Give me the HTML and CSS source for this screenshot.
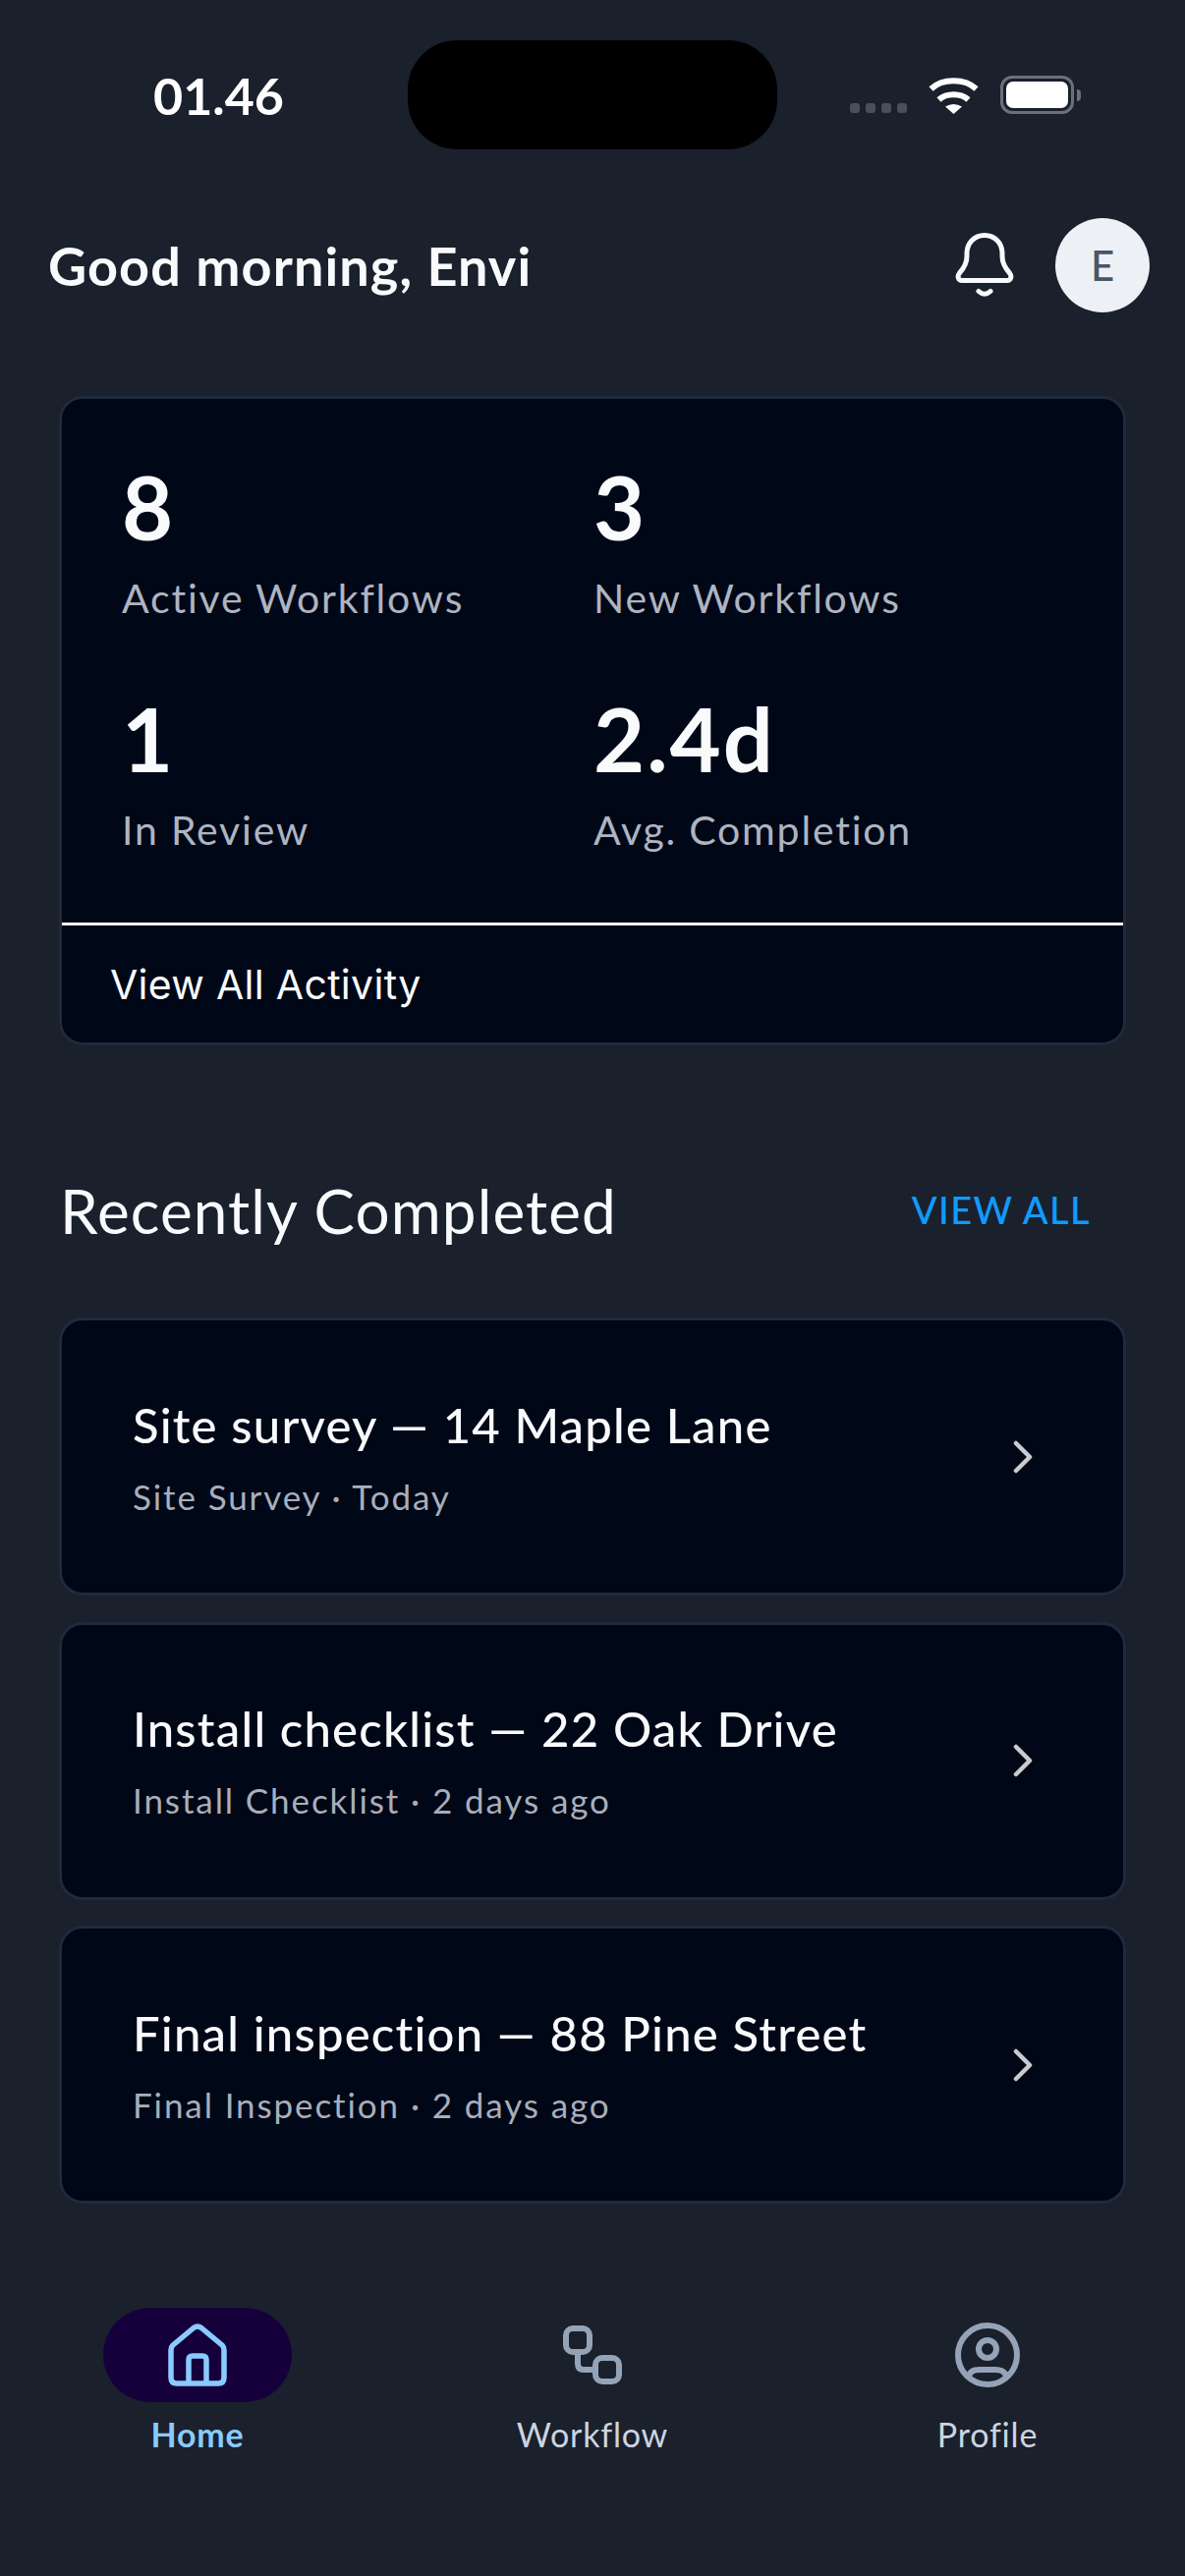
FILE: index.html
```html
<!DOCTYPE html>
<html lang="en">
<head>
    <meta charset="UTF-8">
    <meta name="viewport" content="width=device-width, initial-scale=1.0">
    <title>Home</title>
    <link rel="stylesheet" href="styles.css">
</head>
<body>

    <!-- Status bar -->
    <div class="status-bar">
        <div class="time">01.46</div>
        <div class="island"></div>
        <div class="status-icons">
            <div class="signal"><span></span><span></span><span></span><span></span></div>
            <svg class="wifi" width="51" height="38" viewBox="0 0 51 38">
                <path d="M2.500 12.500C14 1.500 37 1.500 48.500 12.500" fill="none" stroke="#fff" stroke-width="6"/>
                <path d="M10.500 23.500C18 16.500 33 16.500 40.500 23.500" fill="none" stroke="#fff" stroke-width="6"/>
                <path d="M17 30.500Q25.500 25.500 34 30.500L25.500 38Z" fill="#fff"/>
            </svg>
            <div class="battery"><div class="battery-fill"></div></div>
            <div class="battery-nub"></div>
        </div>
    </div>

    <!-- Greeting -->
    <div class="header">
        <h1>Good morning, Envi</h1>
        <svg class="bell" width="60" height="66" viewBox="0 0 60 66" fill="none" stroke="#f8fafc" stroke-width="5" stroke-linecap="round" stroke-linejoin="round">
            <path d="M30 2.500C19 2.500 12 11 12 21V24C12 32 8 37 4.500 41C2 44 3 48.500 7 48.500H53C57 48.500 58 44 55.500 41C52 37 48 32 48 24V21C48 11 41 2.500 30 2.500Z"/>
            <path d="M24 59.500Q30 65 36 59.500"/>
        </svg>
        <div class="avatar">E</div>
    </div>

    <!-- Stats card -->
    <div class="card stats-card">
        <div class="stats-grid">
            <div class="stat">
                <div class="stat-value">8</div>
                <div class="stat-label">Active Workflows</div>
            </div>
            <div class="stat">
                <div class="stat-value">3</div>
                <div class="stat-label">New Workflows</div>
            </div>
            <div class="stat">
                <div class="stat-value">1</div>
                <div class="stat-label">In Review</div>
            </div>
            <div class="stat">
                <div class="stat-value">2.4d</div>
                <div class="stat-label">Avg. Completion</div>
            </div>
        </div>
        <div class="stats-footer">View All Activity</div>
    </div>

    <!-- Recently completed -->
    <div class="section-header">
        <h2>Recently Completed</h2>
        <a class="view-all">VIEW ALL</a>
    </div>

    <div class="list">
        <div class="card list-item">
            <div class="item-text">
                <div class="item-title">Site survey — 14 Maple Lane</div>
                <div class="item-sub">Site Survey · Today</div>
            </div>
            <svg class="chevron" width="20" height="34" viewBox="0 0 20 34"><path d="M3 3L17 17L3 31"/></svg>
        </div>
        <div class="card list-item">
            <div class="item-text">
                <div class="item-title">Install checklist — 22 Oak Drive</div>
                <div class="item-sub">Install Checklist · 2 days ago</div>
            </div>
            <svg class="chevron" width="20" height="34" viewBox="0 0 20 34"><path d="M3 3L17 17L3 31"/></svg>
        </div>
        <div class="card list-item">
            <div class="item-text">
                <div class="item-title">Final inspection — 88 Pine Street</div>
                <div class="item-sub">Final Inspection · 2 days ago</div>
            </div>
            <svg class="chevron" width="20" height="34" viewBox="0 0 20 34"><path d="M3 3L17 17L3 31"/></svg>
        </div>
    </div>

    <!-- Bottom nav -->
    <div class="nav">
        <div class="nav-item active">
            <div class="nav-icon">
                <svg width="60" height="64" viewBox="0 0 60 64" fill="none" stroke="#89cbff" stroke-width="5.500" stroke-linejoin="round">
                    <path d="M3 27Q3 24 5 22L26 4.500Q30 1.500 34 4.500L55 22Q57 24 57 27V55Q57 61 51 61H9Q3 61 3 55Z"/>
                    <path d="M21 61V37Q21 33 25 33H35Q39 33 39 37V61"/>
                </svg>
            </div>
            <span>Home</span>
        </div>
        <div class="nav-item">
            <div class="nav-icon">
                <svg width="60" height="60" viewBox="0 0 60 60" fill="none" stroke="#94a3b8" stroke-width="6">
                    <rect x="3" y="3" width="24" height="24" rx="7"/>
                    <rect x="33" y="33" width="24" height="24" rx="7"/>
                    <path d="M15 27V39Q15 45 21 45H33"/>
                </svg>
            </div>
            <span>Workflow</span>
        </div>
        <div class="nav-item">
            <div class="nav-icon">
                <svg width="66" height="66" viewBox="0 0 66 66" fill="none" stroke="#94a3b8" stroke-width="6">
                    <circle cx="33" cy="33" r="30"/>
                    <circle cx="33" cy="27" r="9"/>
                    <path d="M14 55Q15 48 25 48H41Q51 48 52 55"/>
                </svg>
            </div>
            <span>Profile</span>
        </div>
    </div>

</body>
</html>
```

FILE: styles.css
```css
/* Basic Reset */
* {
    margin: 0;
    padding: 0;
    box-sizing: border-box;
}

body {
    font-family: 'Lato', sans-serif;
    background: #1a202c;
    color: #f8fafc;
    height: 2622px;
    overflow: hidden;
}

/* Status bar */
.status-bar {
    display: grid;
    grid-template-columns: 415px 376px 1fr;
    align-items: center;
    padding-top: 41px;
}

.time {
    padding-left: 156px;
    font-size: 52px;
    font-weight: 700;
    color: #fff;
}

.island {
    height: 111px;
    background: #000;
    border-radius: 50px;
}

.status-icons {
    display: flex;
    align-items: center;
    padding-left: 74px;
}

.signal {
    display: flex;
    gap: 6px;
    align-self: flex-end;
    margin-bottom: 1px;
}

.signal span {
    width: 10px;
    height: 10px;
    border-radius: 3px;
    background: #4b4f59;
}

.wifi {
    margin-left: 22px;
}

.battery {
    margin-left: 22px;
    width: 75px;
    height: 39px;
    padding: 3px;
    border: 3px solid #6d7079;
    border-radius: 12px;
}

.battery-fill {
    height: 100%;
    background: #fff;
    border-radius: 7px;
}

.battery-nub {
    margin-left: 3px;
    width: 4px;
    height: 12px;
    background: #6d7079;
    border-radius: 0 4px 4px 0;
}

/* Greeting */
.header {
    display: flex;
    align-items: center;
    margin-top: 70px;
    padding: 0 36px 0 49px;
}

h1 {
    flex: 1;
    font-size: 54px;
    font-weight: 700;
    letter-spacing: 1.1px;
}

.bell {
    margin-right: 42px;
}

.avatar {
    width: 96px;
    height: 96px;
    display: flex;
    justify-content: center;
    align-items: center;
    border-radius: 50%;
    background: #edf1f6;
    color: #4a5568;
    font-size: 42px;
    font-weight: 500;
}

/* Cards */
.card {
    margin: 0 60px;
    background: #000716;
    border: 3px solid #1f2a3c;
    border-radius: 24px;
}

.stats-card {
    margin-top: 85px;
    height: 661px;
    overflow: hidden;
}

.stats-grid {
    display: grid;
    grid-template-columns: 480px 1fr;
    align-content: start;
    row-gap: 69px;
    height: 533px;
    padding: 61px 0 0 61px;
}

.stat-value {
    font-size: 90px;
    line-height: 96px;
    font-weight: 700;
    letter-spacing: 2px;
}

.stat-label {
    margin-top: 21px;
    font-size: 41px;
    line-height: 50px;
    letter-spacing: 1.8px;
    color: #aeb4c1;
}

.stats-footer {
    display: flex;
    align-items: center;
    height: 122px;
    padding-left: 49px;
    border-top: 3px solid #f8fafc;
    font-family: 'Inter', sans-serif;
    font-size: 41px;
    letter-spacing: 0.3px;
}

/* Section header */
.section-header {
    display: flex;
    justify-content: space-between;
    align-items: center;
    height: 96px;
    margin-top: 120px;
    padding: 0 96px 0 61px;
}

h2 {
    font-size: 62px;
    font-weight: 400;
    letter-spacing: 1.1px;
}

.view-all {
    margin-bottom: 2px;
    font-size: 38px;
    font-weight: 500;
    letter-spacing: 1.4px;
    color: #0f9bff;
}

/* List */
.list {
    display: flex;
    flex-direction: column;
    gap: 26.500px;
    margin-top: 61px;
}

.list-item {
    display: flex;
    justify-content: space-between;
    align-items: center;
    height: 283px;
    padding: 0 92px 0 72px;
}

.item-text {
    padding-bottom: 1px;
}

.item-title {
    font-size: 49px;
    font-weight: 500;
    letter-spacing: 1.200px;
}

.item-sub {
    margin-top: 23px;
    font-size: 35px;
    letter-spacing: 1.9px;
    color: #a8aebb;
}

.chevron path {
    fill: none;
    stroke: #c9cbd0;
    stroke-width: 4.5;
    stroke-linecap: round;
    stroke-linejoin: round;
}

/* Bottom nav */
.nav {
    display: grid;
    grid-template-columns: repeat(3, 1fr);
    margin-top: 106px;
}

.nav-item {
    display: flex;
    flex-direction: column;
    align-items: center;
    font-size: 34px;
    letter-spacing: 0.8px;
    color: #cbd5e1;
}

.nav-icon {
    display: flex;
    justify-content: center;
    align-items: center;
    width: 192px;
    height: 96px;
    border-radius: 48px;
}

.nav-item span {
    margin-top: 12px;
}

.nav-item.active {
    color: #89cbff;
    font-weight: 700;
}

.active .nav-icon {
    background: #16003c;
}
```
